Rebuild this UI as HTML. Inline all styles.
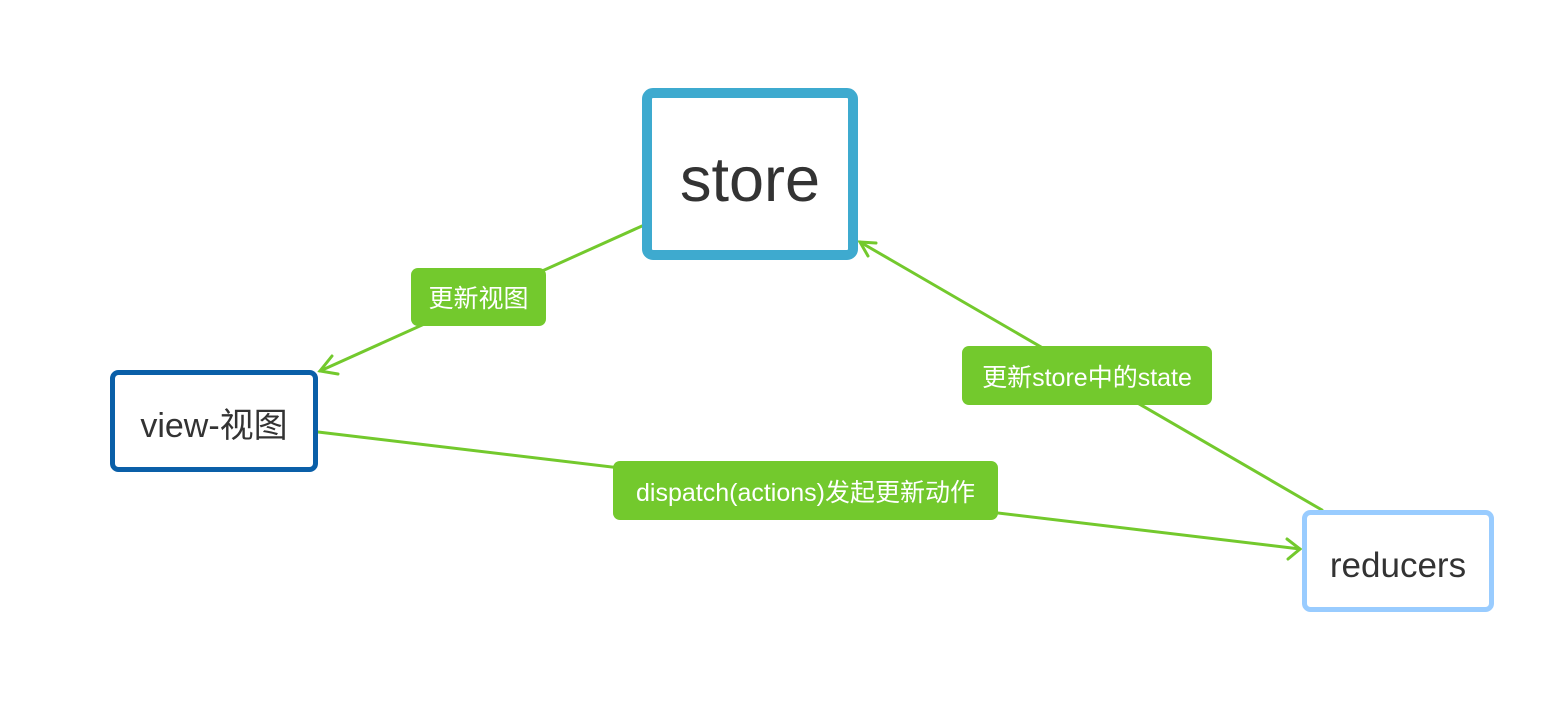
<!DOCTYPE html>
<html><head><meta charset="utf-8"><style>
html,body{margin:0;padding:0;background:#fff;}
svg{display:block;font-family:"Liberation Sans","Noto Sans CJK SC",sans-serif;}
</style></head><body>
<svg width="1566" height="707" viewBox="0 0 1566 707">
<g stroke="#73c92d" stroke-width="3" fill="none" stroke-linecap="round">
<line x1="642" y1="226" x2="320" y2="371"/>
<polyline points="332,356 320,371 338,374"/>
<line x1="318" y1="432" x2="1300" y2="549"/>
<polyline points="1287,539 1300,549 1288,559"/>
<line x1="1322" y1="510" x2="860" y2="242"/>
<polyline points="876,243 860,242 868,256"/>
</g>
<rect x="647" y="93" width="206" height="162" rx="6" fill="#fff" stroke="#3eaacf" stroke-width="10"/>
<text x="750" y="201" font-size="63" fill="#333" text-anchor="middle">store</text>
<rect x="112.5" y="372.5" width="203" height="97" rx="6" fill="#fff" stroke="#0a5fa8" stroke-width="5"/>
<text x="214" y="437" font-size="34" fill="#333" text-anchor="middle">view-视图</text>
<rect x="1304.5" y="512.5" width="187" height="97" rx="6" fill="#fff" stroke="#99ccff" stroke-width="5"/>
<text x="1398" y="577" font-size="35" fill="#333" text-anchor="middle">reducers</text>
<rect x="411" y="268" width="135" height="58" rx="7" fill="#73c92d"/>
<text x="478.5" y="307" font-size="25" fill="#fff" text-anchor="middle">更新视图</text>
<rect x="962" y="346" width="250" height="59" rx="7" fill="#73c92d"/>
<text x="1087" y="386" font-size="25" fill="#fff" text-anchor="middle">更新store中的state</text>
<rect x="613" y="461" width="385" height="59" rx="7" fill="#73c92d"/>
<text x="805.5" y="501" font-size="25" fill="#fff" text-anchor="middle">dispatch(actions)发起更新动作</text>
</svg>
</body></html>
